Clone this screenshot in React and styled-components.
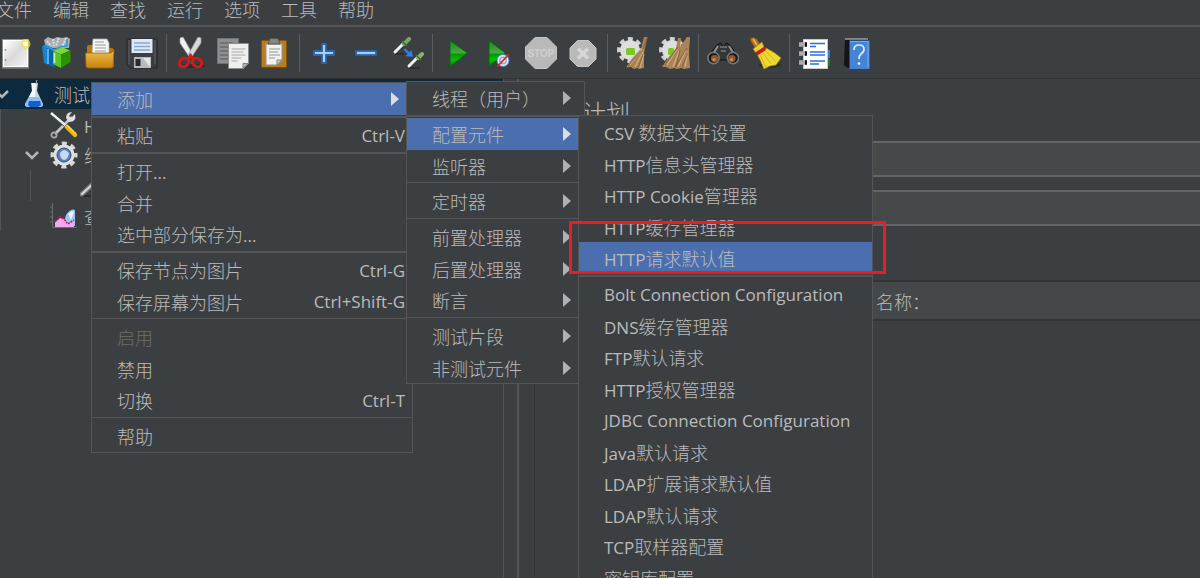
import React from "react";
import styled, { createGlobalStyle, css } from "styled-components";

const menuBar = ["文件", "编辑", "查找", "运行", "选项", "工具", "帮助"];

/* toolbar icons */

const NewIcon = () => (
  <svg viewBox="0 0 32 32">
    <defs>
      <linearGradient id="paper" x1="0" y1="0" x2="1" y2="1">
        <stop offset="0" stopColor="#fff" />
        <stop offset="0.5" stopColor="#dadada" />
        <stop offset="1" stopColor="#f4f4f4" />
      </linearGradient>
    </defs>
    <rect x="2.5" y="2.5" width="26" height="28" fill="#fff" stroke="#8d8f8a" />
    <rect x="4" y="4" width="23" height="25" fill="url(#paper)" />
    <path d="M2 31.2h27" stroke="#75776f" strokeWidth="1.4" />
    <circle cx="5.5" cy="13" r="1" fill="#999" />
    <circle cx="5.5" cy="23" r="1" fill="#999" />
    <circle cx="25.5" cy="7" r="5" fill="#f2e24c" opacity="0.7" />
    <circle cx="25.5" cy="7" r="2.4" fill="#fffde0" />
  </svg>
);

const TemplatesIcon = () => (
  <svg viewBox="0 0 32 32">
    <path d="M2 3l4-3 5 2 4-2 5 1 5-1 3 2-1 9H4z" fill="#a9adb0" />
    <path
      d="M5 4l4 5M11 2l1 7M17 1l-3 8M24 1l-4 9"
      stroke="#dfe3e6"
      strokeWidth="1.8"
      strokeDasharray="2 1"
    />
    <path d="M0 9l3-1.5L13 12v18.5L2 26z" fill="#1583cf" />
    <path d="M5 11l8 3v16.5l-8-3z" fill="#0a62aa" />
    <path d="M6 12v15" stroke="#7cc5f2" strokeWidth="1.5" />
    <path d="M3 9l9 4 6-3 7-1V2" fill="none" stroke="#2f97dc" strokeWidth="1.6" />
    <path d="M11 14l9-4 8 3.5-9 4z" fill="#7ad63a" />
    <path d="M11 14l8 3.5V31l-8-4z" fill="#57c527" />
    <path d="M19 17.5L28.5 13.5V25L19 31z" fill="#2a9205" />
    <path d="M12.5 16v10" stroke="#c5f5a0" strokeWidth="1.5" />
  </svg>
);

const OpenIcon = () => (
  <svg viewBox="0 0 32 32">
    <defs>
      <linearGradient id="folder" x1="0" y1="0" x2="0" y2="1">
        <stop offset="0" stopColor="#f0bc52" />
        <stop offset="1" stopColor="#c98408" />
      </linearGradient>
    </defs>
    <path d="M3 30V10q0-2 2-2h6l2 3h14q3 0 3 3v16z" fill="#b87808" />
    <path d="M8 17L9 2h14l2 4v11z" fill="#f7f7f7" stroke="#aaa" strokeWidth="0.8" />
    <path d="M11 5h9M11 8h11M11 11h11M11 14h11" stroke="#999" strokeWidth="1.2" />
    <path
      d="M1.5 16h25.5l3-3-1 16q0 2-2 2H4q-1.8 0-2-2z"
      fill="url(#folder)"
      stroke="#9c6200"
      strokeWidth="0.8"
    />
  </svg>
);

const SaveIcon = () => (
  <svg viewBox="0 0 32 32">
    <path d="M1 4q0-2 2-2h26q2 0 2 2v27H4l-3-3z" fill="#3b3d42" stroke="#23252a" />
    <path d="M3 3v24M29 3v24" stroke="#5f636a" />
    <rect x="5.5" y="2" width="21" height="14" fill="#dce9f7" />
    <path d="M8 6h16M8 9.5h16M8 13h16" stroke="#89a7cb" strokeWidth="1.3" />
    <rect x="8" y="20" width="17" height="11" fill="#b9bbbd" />
    <rect x="9.5" y="22" width="5" height="7" fill="#26282b" />
    <path d="M17 21l7 0v9z" fill="#e4e4e4" />
  </svg>
);

const CutIcon = () => (
  <svg viewBox="0 0 32 32">
    <ellipse cx="17" cy="29" rx="13" ry="2" fill="#2a2c2e" />
    <path d="M5 1l3-1 9.5 17-2.500 4L5 6z" fill="#f1f1f1" stroke="#a0a0a0" strokeWidth="0.7" />
    <path d="M26 1l-3-1-9.5 17 2.500 4L26 6z" fill="#d8d8d8" stroke="#999" strokeWidth="0.7" />
    <circle cx="15.5" cy="17.5" r="1.2" fill="#666" />
    <ellipse
      cx="9"
      cy="25.5"
      rx="5"
      ry="4"
      transform="rotate(-35 9 25.5)"
      fill="none"
      stroke="#d71818"
      strokeWidth="3"
    />
    <ellipse
      cx="22"
      cy="25.5"
      rx="5"
      ry="4"
      transform="rotate(35 22 25.5)"
      fill="none"
      stroke="#d71818"
      strokeWidth="3"
    />
    <path d="M13 22l2.500-3 3 3" fill="none" stroke="#d71818" strokeWidth="3" />
  </svg>
);

const CopyIcon = () => (
  <svg viewBox="0 0 32 32">
    <rect x="0.5" y="1.5" width="21" height="25" fill="#8d8f90" stroke="#6f7172" />
    <path d="M3 6h13M3 10h9M3 14h9M3 18h9M3 22h9" stroke="#696b6c" strokeWidth="1.3" />
    <path d="M11.5 6.5h20v20l-5 5h-15z" fill="#efefef" stroke="#8b8d88" />
    <path
      d="M14.5 12h14M14.5 15h12M14.5 18h14M14.5 21h10M14.5 24h6"
      stroke="#a5a5a5"
      strokeWidth="1.2"
    />
    <path d="M31 26.5h-5V31z" fill="#bdbdbd" stroke="#80827e" />
  </svg>
);

const PasteIcon = () => (
  <svg viewBox="0 0 32 32">
    <rect x="2.5" y="3.5" width="25" height="27" rx="1" fill="#b97d1e" stroke="#875507" />
    <path d="M4 31h23" stroke="#5d3c08" />
    <path d="M7 7h16v17l-5 4H7z" fill="#f1f1ef" stroke="#94948f" />
    <path d="M11 1.5h8l2 5.5H9z" fill="#85867d" stroke="#55564f" />
    <path d="M10 12h11M10 15h9M10 18h11M10 21h6" stroke="#96968f" strokeWidth="1.2" />
    <path d="M23 23h-5v5z" fill="#c9c9c5" stroke="#85857f" />
  </svg>
);

const PlusIcon = () => (
  <svg viewBox="0 0 32 32">
    <path
      d="M14 7h4v7h8v4h-8v8h-4v-8H6v-4h8z"
      fill="#aacdf0"
      stroke="#2766b0"
      strokeWidth="1.8"
    />
  </svg>
);

const MinusIcon = () => (
  <svg viewBox="0 0 32 32">
    <rect x="6" y="14" width="20" height="4" fill="#aacdf0" stroke="#2766b0" strokeWidth="1.8" />
  </svg>
);

const ToggleIcon = () => (
  <svg viewBox="0 0 32 32">
    <path d="M3 17h9M17 31h11" stroke="#2c2e30" strokeWidth="2" />
    <path d="M3 15l9-9" stroke="#f0f0f0" strokeWidth="3" strokeLinecap="round" />
    <path d="M12 7l5-5" stroke="#74a65c" strokeWidth="4" strokeLinecap="round" />
    <path d="M10 4l5 5" stroke="#3d6d35" strokeWidth="1.5" />
    <path d="M17 29l9-9" stroke="#f0f0f0" strokeWidth="3" strokeLinecap="round" />
    <path d="M26 21l4-4" stroke="#84b868" strokeWidth="4" strokeLinecap="round" />
    <path d="M24 18l5 5" stroke="#3d6d35" strokeWidth="1.5" />
    <path d="M12.5 12l5 5" stroke="#2f80ea" strokeWidth="2.2" />
    <path d="M21 20l-7.500-1 6-6z" fill="#2f80ea" />
  </svg>
);

const StartIcon = () => (
  <svg viewBox="0 0 32 32">
    <defs>
      <linearGradient id="go" x1="0" y1="0" x2="0" y2="1">
        <stop offset="0" stopColor="#168b16" />
        <stop offset="0.48" stopColor="#49a749" />
        <stop offset="0.52" stopColor="#019801" />
        <stop offset="0.75" stopColor="#08bd08" />
        <stop offset="1" stopColor="#057505" />
      </linearGradient>
    </defs>
    <path d="M9 3.5L26.5 16 9 29.5z" fill="url(#go)" stroke="#08640a" />
  </svg>
);

const StartNoPauseIcon = () => (
  <svg viewBox="0 0 32 32">
    <path d="M6 3.5L22.5 16 6 29.500z" fill="url(#go)" stroke="#08640a" />
    <circle cx="20" cy="23.5" r="6" fill="#e6eefa" stroke="#3e87cb" />
    <circle cx="20" cy="23.5" r="3.2" fill="none" stroke="#96a8c8" strokeWidth="1.5" />
    <path d="M14.5 29.5L26 17" stroke="#e02222" strokeWidth="1.8" />
  </svg>
);

const StopIcon = () => (
  <svg viewBox="0 0 32 32">
    <path d="M10 0.5h12L31.500 10v12L22 31.500H10L0.500 22V10z" fill="#b9b9b9" stroke="#c6c6c6" />
    <text
      x="16"
      y="20"
      textAnchor="middle"
      fontFamily="Liberation Sans, sans-serif"
      fontWeight="700"
      fontSize="10"
      fill="#d0d0d0"
    >
      STOP
    </text>
  </svg>
);

const ShutdownIcon = () => (
  <svg viewBox="0 0 32 32">
    <path d="M10.5 3.5h11L29 11v11l-7.500 7.500h-11L3 22V11z" fill="#b9b9b9" stroke="#c6c6c6" />
    <path d="M11 11.500l10 10M21 11.500l-10 10" stroke="#d6d6d6" strokeWidth="3.800" />
  </svg>
);

const Cog = () => (
  <>
    <circle
      cx="14"
      cy="13"
      r="11"
      fill="none"
      stroke="#d2d2d2"
      strokeWidth="4"
      strokeDasharray="4.900 3.740"
      strokeDashoffset="2.450"
    />
    <circle cx="14" cy="13" r="10" fill="#dedede" />
  </>
);

const ClearIcon = () => (
  <svg viewBox="0 0 32 32">
    <Cog />
    <rect x="10" y="11" width="9" height="7" rx="1.5" fill="#7cc81e" />
    <path d="M28 0h3.500L28 16v15l-5 1-2-1-3 1-3-2-5 .5 6-9 9-10z" fill="#a98459" />
    <path d="M26 12L14 28M27 15l-8 15M28 17l-4 14" stroke="#d0ab7c" strokeWidth="1.2" />
    <path d="M25 14L12 29M27 17l-5 14" stroke="#765431" strokeWidth="0.7" />
    <path d="M31 0l-4 12" stroke="#8a6b45" strokeWidth="1.4" />
  </svg>
);

const ClearAllIcon = () => (
  <svg viewBox="0 0 32 32">
    <Cog />
    <rect x="10" y="11" width="6" height="7" rx="1.5" fill="#7cc81e" />
    <path
      d="M20 1h3l-1 9 7-10h3l-1 16 1 15-6 1-3-1-4 1-3-1-4 1-4-2H4l6-9 8-10z"
      fill="#a98459"
    />
    <path d="M19 12L9 28M21 14l-6 16M28 13l-8 17M30 15l-3 15" stroke="#d0ab7c" strokeWidth="1.3" />
    <path d="M20 10L7 28M22 13l-4 17M29 11L17 30M30 16l-6 14" stroke="#765431" strokeWidth="0.7" />
  </svg>
);

const SearchIcon = () => (
  <svg viewBox="0 0 32 32">
    <path d="M10 8l4-2 2 4h1l2-4 4 2 6 9-5 6H8l-6-5z" fill="#343638" stroke="#111" />
    <path d="M11 9l-5 8M22 9l5 8" stroke="#8e9194" strokeWidth="2" />
    <path d="M13 10h7M14 14h5" stroke="#77797c" strokeWidth="1.5" />
    <circle cx="6.5" cy="21" r="5.600" fill="#17191a" stroke="#75777a" strokeWidth="1.6" />
    <circle cx="26" cy="21" r="5.600" fill="#17191a" stroke="#75777a" strokeWidth="1.6" />
    <circle cx="7.5" cy="21.5" r="3.6" fill="#95562b" />
    <circle cx="25" cy="21.5" r="3.6" fill="#95562b" />
    <circle cx="7" cy="22.5" r="1.6" fill="#d48a50" />
    <circle cx="24.5" cy="22.5" r="1.6" fill="#d48a50" />
  </svg>
);

const BroomIcon = () => (
  <svg viewBox="0 0 32 32">
    <ellipse cx="21" cy="28" rx="11" ry="3" fill="#2a2c2e" />
    <path d="M1 1q4-2 7 1l3 5-5 4-4-6z" fill="#b27425" stroke="#744409" />
    <path d="M4 2l4 6" stroke="#e3b06b" strokeWidth="1.6" />
    <path d="M4 12l9-7 2 5-8 6z" fill="#e8ce3a" stroke="#97801a" strokeWidth="0.6" />
    <path
      d="M8 17l9-6q10 5 15 10l-5 7-6 1-6 3q-3-8-7-15z"
      fill="#f0d92e"
      stroke="#a48b10"
      strokeWidth="0.7"
    />
    <path d="M6 15.5l10-6 1 3.500-8.500 5.500z" fill="#cf1818" />
    <path d="M11 18l6 12M14 16l8 11M17 14l10 11" stroke="#cdb522" />
  </svg>
);

const FunctionIcon = () => (
  <svg viewBox="0 0 32 32">
    <rect x="28" y="13" width="4" height="8" fill="#3577d7" />
    <rect x="28" y="22" width="4" height="7" fill="#15851e" />
    <rect x="5.5" y="2.5" width="24" height="29" fill="#fff" stroke="#c9c9c9" />
    <path d="M1 7.5h7M1 16.5h7M1 25.5h7" stroke="#aaacae" strokeWidth="4.5" />
    <path d="M7 7.5h2M7 16.5h2M7 25.5h2" stroke="#111" strokeWidth="4.5" />
    <path
      d="M12 6.5h15M12 9.5h6M12 15h15M12 18h15M12 24h15M12 27h9"
      stroke="#2b6fd6"
      strokeWidth="1.6"
    />
  </svg>
);

const HelpIcon = () => (
  <svg viewBox="0 0 32 32">
    <path d="M5 1.5h23.500V31H8L4 28z" fill="#141516" />
    <path d="M9.5 3.5h20V32h-20z" fill="#4484d6" />
    <path d="M10 4.5h18v26" fill="none" stroke="#79aceb" />
    <path d="M5 2h23" stroke="#dfe3e8" />
    <path
      d="M14 13q0-5 5-5t5 4q0 3-3 5-2 1.500-2 5"
      fill="none"
      stroke="#dfeaf8"
      strokeWidth="1.7"
    />
    <circle cx="19" cy="26.5" r="1.3" fill="#fff" />
  </svg>
);

/* tree icons */

const FlaskIcon = () => (
  <svg viewBox="0 0 28 28">
    <path d="M11 3h7l-1 8 6 13q0 3-3 3H8q-3 0-3-3l7-13z" fill="#c9d5e2" />
    <path d="M12 3h4l-1 14H9l3-6z" fill="#f7f7f7" />
    <path d="M9 17h10l4 7q0 3-3 3H8q-3 0-3-3z" fill="#8fbdf0" />
    <path d="M9 21h11l1 4-3 2h-8l-2-2z" fill="#0f62cc" />
    <path d="M16 4l1-5" stroke="#aaa" />
  </svg>
);

const ToolsIcon = () => (
  <svg viewBox="0 0 28 28">
    <path d="M5 23L22 6" stroke="#c5c7c8" strokeWidth="2.6" />
    <path d="M25 3l-4 4-2-2 3-4q-6 0-6 6l3 4q8 0 6-8z" fill="#dddfe0" />
    <circle cx="4" cy="24" r="2.6" fill="none" stroke="#a5a7a8" strokeWidth="1.8" />
    <path d="M1 2l14 12" stroke="#f0f0f0" strokeWidth="2.5" />
    <path d="M2 5l12 10" stroke="#55585a" />
    <path d="M17 16l8 8" stroke="#f5b50a" strokeWidth="4.4" strokeLinecap="round" />
    <path d="M17 14l9 9" stroke="#ffdc5c" strokeWidth="1.3" />
  </svg>
);

const GearIcon = () => (
  <svg viewBox="0 0 28 28">
    <circle
      cx="14"
      cy="14"
      r="11.5"
      fill="none"
      stroke="#d5d6d7"
      strokeWidth="4"
      strokeDasharray="5 4.030"
      strokeDashoffset="2.5"
    />
    <circle cx="14" cy="14" r="10.5" fill="#dfe0e1" />
    <circle cx="14" cy="14" r="7" fill="#587fb9" stroke="#3a4d69" />
    <path d="M10 12q4-6 9 0-1 7-5 7-4-1-4-7z" fill="#c5daf2" />
  </svg>
);

const PipetteIcon = () => (
  <svg viewBox="0 0 28 28">
    <path d="M1 24h15" stroke="#27292b" strokeWidth="2" />
    <path d="M2 22l14-13" stroke="#77797a" strokeWidth="5" strokeLinecap="round" />
    <path d="M2 22l14-13" stroke="#d7d7d7" strokeWidth="2" strokeLinecap="round" />
    <path d="M15 10l7-7" stroke="#74a65c" strokeWidth="5" strokeLinecap="round" />
  </svg>
);

const GraphIcon = () => (
  <svg viewBox="0 0 28 28">
    <path d="M2.5 1v24.500H27" fill="none" stroke="#6b6d6f" />
    <path d="M0 5h3M0 10h3M0 15h3M0 20h3" stroke="#6b6d6f" />
    <path d="M13 24l3-11q5-7 9-5v16z" fill="#9cc4f5" />
    <path d="M18 12q4-4 6-2l-3 8z" fill="#eaf3ff" />
    <path d="M5 25v-5l5-4 5 1 3 4 6-3v7z" fill="#f3a8ee" />
    <path
      d="M5 20l5-5 4 2 4 5 6-4"
      fill="none"
      stroke="#c2185f"
      strokeWidth="1.5"
      strokeDasharray="2 1"
    />
  </svg>
);

const Chevron = () => (
  <svg width="14" height="14" viewBox="0 0 14 14" aria-hidden="true">
    <path d="M1 4l6 6 6-6" fill="none" stroke="#b4b6b7" strokeWidth="2.5" />
  </svg>
);

const toolGroups = [
  [
    ["新建", NewIcon],
    ["模板", TemplatesIcon],
    ["打开", OpenIcon],
    ["保存", SaveIcon],
  ],
  [
    ["剪切", CutIcon],
    ["复制", CopyIcon],
    ["粘贴", PasteIcon],
  ],
  [
    ["展开", PlusIcon],
    ["折叠", MinusIcon],
    ["切换", ToggleIcon],
  ],
  [
    ["启动", StartIcon],
    ["不停顿开始", StartNoPauseIcon],
    ["停止", StopIcon],
    ["关闭", ShutdownIcon],
  ],
  [
    ["清除", ClearIcon],
    ["清除全部", ClearAllIcon],
  ],
  [
    ["查找", SearchIcon],
    ["重置查找", BroomIcon],
  ],
  [
    ["函数助手", FunctionIcon],
    ["帮助", HelpIcon],
  ],
];

const treeRows = [
  { label: "测试计划", icon: FlaskIcon, level: 0, open: true, selected: true },
  { label: "HTTP信息头管理器", icon: ToolsIcon, level: 1 },
  { label: "线程组", icon: GearIcon, level: 1, open: true },
  { label: "HTTP请求", icon: PipetteIcon, level: 2 },
  { label: "查看结果树", icon: GraphIcon, level: 1 },
];

const configMenu = [
  {
    items: [
      { label: "CSV 数据文件设置" },
      { label: "HTTP信息头管理器" },
      { label: "HTTP Cookie管理器" },
      { label: "HTTP缓存管理器" },
      { label: "HTTP请求默认值", active: true, marked: true },
    ],
  },
  {
    line: 2,
    items: [
      { label: "Bolt Connection Configuration" },
      { label: "DNS缓存管理器" },
      { label: "FTP默认请求" },
      { label: "HTTP授权管理器" },
      { label: "JDBC Connection Configuration" },
      { label: "Java默认请求" },
      { label: "LDAP扩展请求默认值" },
      { label: "LDAP默认请求" },
      { label: "TCP取样器配置" },
      { label: "密钥库配置" },
    ],
  },
];

const addMenu = [
  { items: [{ label: "线程（用户）", arrow: true }] },
  {
    line: 2,
    items: [
      {
        label: "配置元件",
        arrow: true,
        active: true,
        menu: { groups: configMenu, width: 295, rise: 3 },
      },
      { label: "监听器", arrow: true },
    ],
  },
  { line: 1, items: [{ label: "定时器", arrow: true }] },
  {
    line: 1,
    items: [
      { label: "前置处理器", arrow: true },
      { label: "后置处理器", arrow: true },
      { label: "断言", arrow: true },
    ],
  },
  {
    line: 1,
    items: [
      { label: "测试片段", arrow: true },
      { label: "非测试元件", arrow: true },
    ],
  },
];

const contextMenu = [
  {
    items: [
      {
        label: "添加",
        arrow: true,
        active: true,
        menu: { groups: addMenu, width: 179, rise: 2 },
      },
    ],
  },
  { line: 2, items: [{ label: "粘贴", keys: "Ctrl-V" }] },
  {
    line: 2,
    items: [{ label: "打开..." }, { label: "合并" }, { label: "选中部分保存为..." }],
  },
  {
    line: 2,
    items: [
      { label: "保存节点为图片", keys: "Ctrl-G" },
      { label: "保存屏幕为图片", keys: "Ctrl+Shift-G" },
    ],
  },
  {
    line: 1,
    items: [
      { label: "启用", disabled: true },
      { label: "禁用" },
      { label: "切换", keys: "Ctrl-T" },
    ],
  },
  { line: 1, items: [{ label: "帮助" }] },
];

// latin runs are set a size smaller than the chinese ones
function Label({ text }) {
  return (
    <LabelText>
      {text
        .split(/([\x20-\x7e]+)/)
        .map((part, i) => (i % 2 ? <Latin key={i}>{part}</Latin> : part))}
    </LabelText>
  );
}

function Menu({ groups }) {
  return groups.map((group, i) => (
    <MenuGroup key={i} $line={group.line}>
      {group.items.map((item) => (
        <MenuItem key={item.label}>
          <MenuButton type="button" disabled={item.disabled} $active={item.active}>
            <Label text={item.label} />
            {item.keys && <Keys>{item.keys}</Keys>}
            {item.arrow && <Arrow $active={item.active} />}
          </MenuButton>
          {item.menu && (
            <SubMenu $width={item.menu.width} $rise={item.menu.rise}>
              <Menu groups={item.menu.groups} />
            </SubMenu>
          )}
          {item.marked && <Marker />}
        </MenuItem>
      ))}
    </MenuGroup>
  ));
}

export default function App() {
  return (
    <Window>
      <GlobalStyle />
      <MenuBar>
        {menuBar.map((name) => (
          <MenuBarButton type="button" key={name}>
            {name}
          </MenuBarButton>
        ))}
      </MenuBar>
      <ToolBar>
        {toolGroups.map((tools, i) => (
          <ToolGroup key={i}>
            {tools.map(([name, Icon]) => (
              <ToolButton type="button" key={name} aria-label={name}>
                <Icon />
              </ToolButton>
            ))}
          </ToolGroup>
        ))}
      </ToolBar>
      <Body>
        <Tree>
          {treeRows.map(({ label, icon: Icon, level, open, selected }) => (
            <TreeRow key={label} $level={level} $selected={selected}>
              <Toggle>{open && <Chevron />}</Toggle>
              <TreeIcon>
                <Icon />
              </TreeIcon>
              <Label text={label} />
            </TreeRow>
          ))}
        </Tree>
        <Divider />
        <Detail>
          <h1>测试计划</h1>
          <Field aria-label="名称" />
          <Field aria-label="注释" />
          <Variables>
            <thead>
              <tr>
                <th>名称：</th>
              </tr>
            </thead>
          </Variables>
        </Detail>
      </Body>
      <ContextMenu>
        <Menu groups={contextMenu} />
      </ContextMenu>
    </Window>
  );
}

const GlobalStyle = createGlobalStyle`
  * {
    box-sizing: border-box;
  }
  body {
    margin: 0;
    background: #3c3f41;
  }
  body,
  button,
  input {
    font-family: "Open Sans", "Noto Sans CJK SC", sans-serif;
    font-size: 18px;
    font-weight: 300;
    color: #bbbbbb;
  }
  button {
    padding: 0;
    border: 0;
    background: none;
  }
  ul {
    margin: 0;
    padding: 0;
    list-style: none;
  }
`;

const Window = styled.div`
  position: relative;
  display: flex;
  flex-direction: column;
  height: 100vh;
  overflow: hidden;
`;

const MenuBar = styled.nav`
  display: flex;
  flex: none;
  gap: 21px;
  height: 27px;
  padding-bottom: 4px;
  border-bottom: 2px solid #555555;
  button:first-child {
    margin-left: -4px;
  }
`;

const MenuBarButton = styled.button`
  line-height: 21px;
`;

const ToolBar = styled.div`
  display: flex;
  flex: none;
  height: 52px;
  border-bottom: 1px solid #323232;
`;

const ToolGroup = styled.div`
  display: flex;
  align-items: center;
  &:first-child {
    margin-left: -5px;
  }
  & + &::before {
    content: "";
    width: 1px;
    height: 38px;
    margin: 0 3px;
    background: #5a5c5e;
  }
`;

const ToolButton = styled.button`
  display: flex;
  justify-content: center;
  width: 42px;
  svg {
    width: 32px;
    height: 32px;
  }
`;

const Body = styled.div`
  display: flex;
  flex: 1;
`;

const Tree = styled.ul`
  flex: none;
  width: 42%;
  border-right: 1px solid #555555;
  overflow: hidden;
`;

const TreeRow = styled.li`
  display: flex;
  align-items: center;
  height: 30px;
  padding-left: ${({ $level }) => $level * 30 - 5}px;
  white-space: nowrap;
  ${({ $level }) =>
    $level === 0 &&
    css`
      padding-left: 0;
      margin-left: -5px;
    `}
  ${({ $level }) =>
    $level > 0 &&
    css`
      box-shadow: inset 1px 0 #555555;
    `}
  ${({ $level }) =>
    $level > 1 &&
    css`
      background: linear-gradient(#555555, #555555) 30px 0 / 1px 100% no-repeat;
    `}
  ${({ $selected }) =>
    $selected &&
    css`
      background: #0d293e;
    `}
  &:nth-child(even) {
    height: 31px;
  }
`;

const Toggle = styled.span`
  display: flex;
  width: 25px;
`;

const TreeIcon = styled.span`
  display: flex;
  margin-right: 6px;
  svg {
    width: 28px;
    height: 28px;
  }
`;

const Divider = styled.div`
  width: 15px;
  border-right: 2px solid #555555;
`;

const Detail = styled.main`
  display: flex;
  flex: 1;
  flex-direction: column;
  padding: 18px 0 0 15px;
  h1 {
    margin: 0 0 12px;
    font-size: 24px;
    font-weight: 300;
    line-height: 32px;
  }
`;

const Field = styled.input`
  height: 36px;
  margin-bottom: 13px;
  border: solid #646464;
  border-width: 2px 0;
  background: #45494a;
`;

const Variables = styled.table`
  flex: 1;
  margin-top: 41px;
  border-left: 1px solid #323537;
  border-collapse: collapse;
  display: block;
  thead,
  tr,
  th {
    display: block;
  }
  th {
    height: 41px;
    padding-left: 341px;
    border: solid #323537;
    border-width: 2px 0;
    background: #45484a;
    font-weight: 300;
    line-height: 38px;
    text-align: left;
  }
`;

const menuBox = css`
  position: absolute;
  border: 1px solid #555555;
  background: #3c3f41;
`;

const ContextMenu = styled.div`
  ${menuBox}
  top: 82px;
  left: 91px;
  width: 322px;
`;

const SubMenu = styled.div`
  ${menuBox}
  z-index: 1;
  top: -${({ $rise }) => $rise}px;
  left: calc(100% - 6px);
  width: ${({ $width }) => $width}px;
`;

const MenuGroup = styled.ul`
  ${({ $line }) =>
    $line &&
    css`
      margin-top: 1px;
      padding-top: ${3 - $line}px;
      border-top: ${$line}px solid #555555;
    `}
`;

const MenuItem = styled.li`
  position: relative;
  height: 32px;
  &:nth-child(even) {
    height: 31px;
  }
`;

const MenuButton = styled.button`
  display: flex;
  align-items: center;
  width: 100%;
  height: 100%;
  padding: 0 7px 0 25px;
  text-align: left;
  white-space: nowrap;
  background: ${({ $active }) => ($active ? "#4b6eaf" : "none")};
  &:disabled {
    color: #6c6c6c;
  }
`;

const LabelText = styled.span`
  white-space: pre;
`;

const Latin = styled.span`
  font-size: 17px;
  font-weight: 400;
`;

const Keys = styled.kbd`
  margin-left: auto;
  font-family: inherit;
  font-size: 17px;
  font-weight: 400;
`;

const Arrow = styled.i`
  margin: 0 6px 0 auto;
  border: solid transparent;
  border-width: 7px 0 7px 8px;
  border-left-color: ${({ $active }) => ($active ? "#dddddd" : "#afb1b3")};
`;

const Marker = styled.span`
  position: absolute;
  z-index: 2;
  inset: -21px -14px 0 -10px;
  border: 3px solid #ed1c24;
  pointer-events: none;
`;
